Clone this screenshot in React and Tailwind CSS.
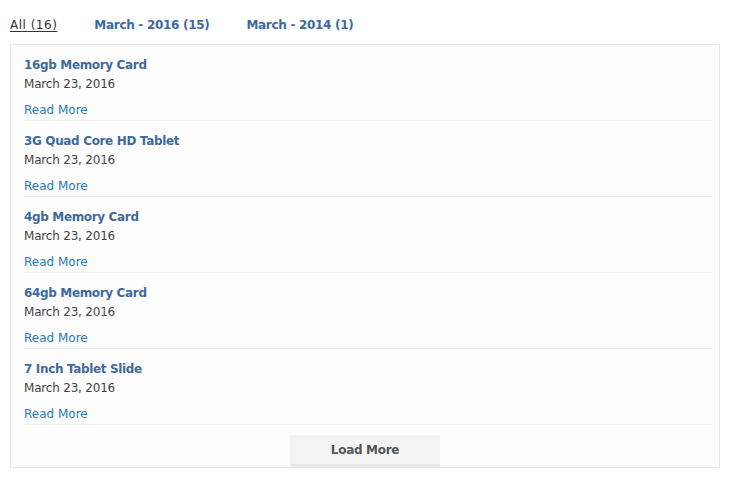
const posts = [
	"16gb Memory Card",
	"3G Quad Core HD Tablet",
	"4gb Memory Card",
	"64gb Memory Card",
	"7 Inch Tablet Slide",
];

export default function App() {
	return (
		<div className="w-[730px] h-[483px] bg-white px-[10px] pt-[15px] font-['DejaVu_Sans',sans-serif] text-[12px]">
			{/* Filter tabs */}
			<div className="flex h-[20px] items-center leading-[20px]">
				<a className="mr-[37px] tracking-[0.5px] text-[#333] underline underline-offset-2">All (16)</a>
				<a className="mr-[37px] font-bold tracking-[-0.3px] text-[#3d6a9e]">March - 2016 (15)</a>
				<a className="font-bold tracking-[-0.3px] text-[#3d6a9e]">March - 2014 (1)</a>
			</div>

			{/* Post list */}
			<div className="mt-[9px] w-[710px] border border-[#e8e8e8] bg-[#fdfdfd] pl-[13px] pr-[7px]">
				{posts.map((p) => (
					<div key={p} className="border-b border-[#eeeeee] pt-[11px] leading-[19px]">
						<div className="font-bold tracking-[-0.35px] text-[#3d6a9e]">{p}</div>
						<div className="tracking-[-0.2px] text-[#444]">March 23, 2016</div>
						<div className="mt-[7px] text-[#2a7ab3]">Read More</div>
					</div>
				))}
				<div className="flex justify-center pt-[10px] -ml-[6px]">
					<button className="h-[32px] w-[150px] border-b-[3px] border-[#e8e8e8] bg-[#f3f3f3] pt-[2px] font-bold tracking-[-0.3px] text-[#555] leading-[27px]">
						Load More
					</button>
				</div>
			</div>
		</div>
	);
}
